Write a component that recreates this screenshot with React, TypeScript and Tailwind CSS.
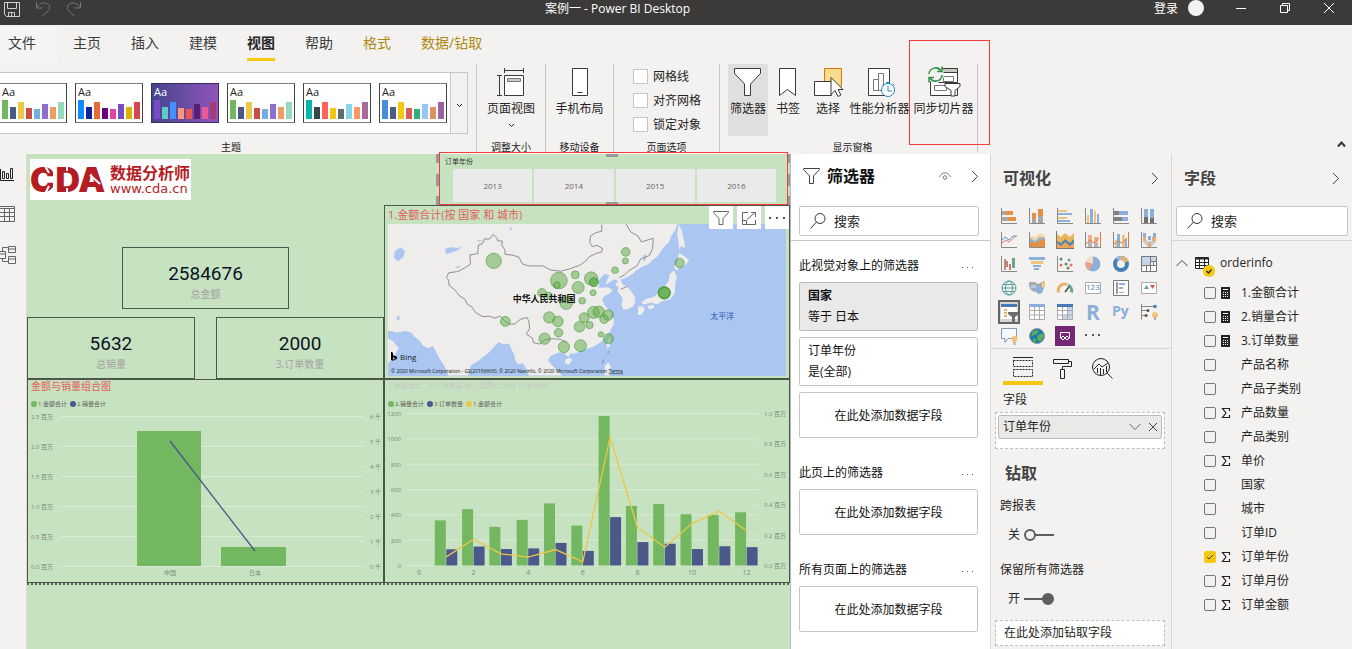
import type { ReactNode } from "react"

const themes = [
  ["#73b761", "#4a588a", "#ecc846", "#cd4c46", "#71afe2", "#8d6fd1", "#ee9e64", "#95dabb"],
  ["#118dff", "#12239e", "#e66c37", "#6b007b", "#e044a7", "#744ec2", "#d9b300", "#d64550"],
  ["#7b4ac7", "#5ecbc8", "#438fff", "#ff977e", "#eb5757", "#5b1e73", "#ec5a96", "#a43b76"],
  ["#73b761", "#4a588a", "#ecc846", "#cd4c46", "#71afe2", "#8d6fd1", "#ee9e64", "#95dabb"],
  ["#01b8aa", "#374649", "#fd625e", "#f2c80f", "#5f6b6d", "#8ad4eb", "#fe9666", "#a66999"],
  ["#4a8ddc", "#4c5d8a", "#f3c911", "#dc5b57", "#33ae81", "#95c8f0", "#dd915f", "#9a64a0"],
]
const themeBars = [19, 12, 17, 11, 10, 15, 12, 17]

const Chevron = ({ d, w = 8, h = 12, color = "#444" }: { d: string; w?: number; h?: number; color?: string }) => (
  <svg width={w} height={h} viewBox={`0 0 ${w} ${h}`} fill="none" stroke={color} className="shrink-0">
    <path d={d} />
  </svg>
)

const TitleBar = () => (
  <header className="flex h-[25px] shrink-0 items-start bg-[#3b3a39] text-xs leading-[18px] text-white">
    <div className="flex gap-4 pl-1">
      <button aria-label="保存" className="h-[18px]">
        <svg width="16" height="16" viewBox="0 0 16 16" fill="none" stroke="#d0d0d0">
          <path d="M.5 1.5h15v14h-13l-2-2zM3.5 1.5v6h9v-6M4.500 15.500v-4h6v4M7.500 12v3" />
        </svg>
      </button>
      <button aria-label="撤消" className="h-[18px]">
        <svg width="15" height="16" viewBox="0 0 15 16" fill="none" stroke="#777">
          <path d="M.5 1v6h6M.5 7C3 2.500 7 1 10.500 2.500c4 1.800 4 5.500 1.500 7.500L6 15.500" />
        </svg>
      </button>
      <button aria-label="恢复" className="h-[18px]">
        <svg width="14" height="16" viewBox="0 0 14 16" fill="none" stroke="#777">
          <path d="M13.500 1v6h-6M13.500 7C11 2.500 7 1 3.500 2.500c-4 1.800-4 5.500-1.500 7.500L8 15.500" />
        </svg>
      </button>
    </div>
    <h1 className="flex-1 text-center">案例一 - Power BI Desktop</h1>
    <button className="h-[18px]">登录</button>
    <span className="ml-2.5 mr-8 size-4 rounded-full bg-[#f3f2f1]" />
    <div className="flex h-4 items-center gap-[34px] pr-[18px]">
      <button aria-label="最小化"><Chevron w={10} h={10} color="#fff" d="M0 5.500h10" /></button>
      <button aria-label="还原"><Chevron w={10} h={10} color="#fff" d="M.5 2.500h7v7h-7zM2.500 2.500v-2h7v7h-2" /></button>
      <button aria-label="关闭"><Chevron w={10} h={10} color="#fff" d="M0 0l10 10M10 0L0 10" /></button>
    </div>
  </header>
)

const tabs = ["主页", "插入", "建模", "视图", "帮助", "格式", "数据/钻取"]

const Tabs = () => (
  <nav className="flex h-9 shrink-0 text-sm leading-9 text-[#3b3a39]">
    <button className="w-[58px] bg-[#f4f4f4] pr-3.5">文件</button>
    {tabs.map((tab, i) => (
      <button
        key={tab}
        className={
          i === 3 ? "relative px-[15px] font-bold text-[#252423]" : i > 4 ? "px-[15px] text-[#b08a13]" : "px-[15px]"
        }
      >
        {tab}
        {i === 3 && <span className="absolute inset-x-[15px] bottom-0 h-[3px] bg-[#f2c811]" />}
      </button>
    ))}
  </nav>
)

const Group = ({ label, className, children }: { label: string; className: string; children: ReactNode }) => (
  <section className={`flex h-[88px] shrink-0 flex-col justify-between border-r border-[#c8c6c4] ${className}`}>
    <div className="flex">{children}</div>
    <h2 className="text-center text-[10px] leading-[10px]">{label}</h2>
  </section>
)

const Tool = ({ label, className = "", icon, children }: { label: string; className?: string; icon: ReactNode; children?: ReactNode }) => (
  <button className={`flex h-[72px] flex-col items-center whitespace-nowrap pt-1 text-xs leading-[18px] ${className}`}>
    <svg width="32" height="32" viewBox="0 0 32 32" fill="none" stroke="#3b3a39" className="shrink-0 overflow-visible">
      {icon}
    </svg>
    {label}
    {children}
  </button>
)

const Ribbon = () => (
  <div className="relative flex h-[93px] shrink-0 pt-[3px] text-[#252423]">
    <section className="flex h-[88px] w-[477px] shrink-0 flex-col justify-between border-r border-[#c8c6c4] pt-2">
      <div className="flex h-[62px] w-[468px] border border-l-0 border-[#c8c6c4] bg-white">
        <div className="flex flex-1 items-center gap-2 overflow-hidden">
          {themes.map((colors, i) => (
            <button
              key={i}
              aria-label={`主题 ${i + 1}`}
              className={`flex h-10 shrink-0 flex-col items-start justify-between border-y pb-[3px] ${
                i === 0 ? "w-[67px] border-r pl-0.5" : "w-[68px] border-x pl-0.5"
              } ${i === 2 ? "border-[#33305e] bg-linear-to-r from-[#43458c] to-[#9153bd] text-white" : "border-x-[#444] border-y-[#777988] bg-white"}`}
            >
              <span className="text-[11px] leading-4">Aa</span>
              <span className="flex h-[19px] items-end gap-0.5">
                {colors.map((color, j) => (
                  <span key={j} className="w-1.5" style={{ background: color, height: themeBars[j] }} />
                ))}
              </span>
            </button>
          ))}
        </div>
        <button aria-label="更多主题" className="flex w-[17px] items-center justify-center border-l border-[#c8c6c4] bg-[#f3f2f1] pt-1">
          <Chevron w={7} h={5} color="#222" d="M1 1l2.500 2.500L6 1" />
        </button>
      </div>
      <h2 className="pr-3.5 text-center text-[10px] leading-[10px]">主题</h2>
    </section>
    <Group label="调整大小" className="w-[69px]">
      <Tool
        label="页面视图"
        className="w-full"
        icon={
          <>
            <path d="M4.500 7.500v20M2 7.500h5M2 27.500h5M9.500 2.500h19M9.500 0v5M28.500 0v5" />
            <path d="M9.500 7.500h19v20h-19z" fill="#fff" />
            <path d="M12.500 10.500h13v3h-13z" fill="#c8c8c8" stroke="#777" />
          </>
        }
      >
        <Chevron w={7} h={14} color="#222" d="M1 6l2.500 2.500L6 6" />
      </Tool>
    </Group>
    <Group label="移动设备" className="w-[68px]">
      <Tool label="手机布局" className="w-full" icon={<><path d="M8.500.5h15v27h-15z" fill="#fff" /><path d="M13.500 24.500h5" /></>} />
    </Group>
    <Group label="页面选项" className="w-[106px]">
      <div className="flex flex-col gap-[9px] pl-[19px] pt-[5px] text-xs leading-[15px]">
        {["网格线", "对齐网格", "锁定对象"].map((label) => (
          <label key={label} className="flex gap-[5px]">
            <input type="checkbox" className="size-[15px] appearance-none border border-[#c8c6c4] bg-white" />
            {label}
          </label>
        ))}
      </div>
    </Group>
    <Group label="显示窗格" className="w-[258px] pl-2">
      <Tool label="筛选器" className="w-10 bg-[#e1dfdd]" icon={<path d="M2.500.5h26v5L18.500 16v11.500h-6V16L2.500 5.500z" fill="#fff" />} />
      <Tool label="书签" className="w-10" icon={<path d="M7.500.5h16v27l-8-6-8 6z" fill="#fff" />} />
      <Tool
        label="选择"
        className="w-10"
        icon={
          <>
            <path d="M12.500.5h17v18h-17z" fill="#f8dc8d" stroke="#d9760f" />
            <path d="M2.500 13.500h17v14h-17z" fill="#fff" />
            <path d="M19 9.500v17l4-4 3 6 3-1.500-3-5.500h5z" fill="#fff" />
          </>
        }
      />
      <Tool
        label="性能分析器"
        className="w-[63px]"
        icon={
          <>
            <path d="M4.500.5h21v27h-21z" fill="#fff" />
            <path d="M9.500 11.500h5v11h-5zM14.500 5.500h5v17h-5z" stroke="#777" />
            <circle cx="24" cy="22" r="6.500" fill="#fff" stroke="#1e88c9" />
            <path d="M24 18v5h4M22 14.500h4M29 16l1.500 1.500M18 16.500l1 1" stroke="#1e88c9" />
          </>
        }
      />
      <div className="relative">
        <Tool
          label="同步切片器"
          className="w-[65px]"
          icon={
            <>
              <path d="M2.500 13.500h27v14h-27z" fill="#fff" />
              <path d="M10.500.5h19v14h-19z" fill="#fff" />
              <path d="M10.500.5h19v4h-19z" fill="#c8c8c8" />
              <path d="M15.500 8.500h10v5h-10zM6.500 17.500h12v5h-12z" stroke="#777" />
              <path d="M17 15.500h15v3l-5 4v5.500h-4v-5.500l-6-4z" fill="#fff" />
              <circle cx="7.500" cy="6.500" r="8.500" fill="#f3f2f1" stroke="none" />
              <path
                d="M1 6A6.500 6.500 0 0 1 13 3M14 -1.500V3.500H9M14 7A6.500 6.500 0 0 1 2 10M1 14.500V9.500H6"
                stroke="#2f9447"
                strokeWidth="1.500"
              />
            </>
          }
        />
        <span className="absolute -left-0.5 -top-6 h-[105px] w-[81px] border border-[#fa3c3c]" />
      </div>
    </Group>
    <button aria-label="折叠功能区" className="absolute bottom-1 right-1 p-0.5">
      <svg width="9" height="7" viewBox="0 0 9 7" fill="none" stroke="#333" strokeWidth="2">
        <path d="M1 5.500l3.500-4 3.500 4" />
      </svg>
    </button>
  </div>
)

const SideNav = () => (
  <nav className="flex w-[27px] shrink-0 flex-col gap-6 overflow-hidden border-r border-[#dddbd9] pt-3">
    <button aria-label="报表">
      <svg width="16" height="16" viewBox="0 0 16 16" fill="none" stroke="#222">
        <path d="M.5 3v11.500H14M2.500 5.500h2v7h-2zM6.500 7.500h2v5h-2zM10.500 2.500h2v10h-2z" />
      </svg>
    </button>
    <button aria-label="数据">
      <svg width="16" height="16" viewBox="0 0 16 16" fill="none" stroke="#666">
        <path d="M0 .5h14.500v15H0M0 2.500h14.500M0 6.500h14.500M0 10.500h14.500M4.500 2.500v13M9.500 2.500v13" />
      </svg>
    </button>
    <button aria-label="模型">
      <svg width="16" height="18" viewBox="0 0 16 18" fill="none" stroke="#666">
        <path d="M8.500.5h7v6h-7zM8.500 3h7M8.500 10.500h7v7h-7zM8.500 13h7M0 5.500h5.500v7H0M0 8h5.500M2.500 5.500v-4h6M2.500 12.500v3h6" />
      </svg>
    </button>
  </nav>
)

const Logo = () => (
  <svg width="161" height="41" viewBox="0 0 161 41" className="ml-[3px] mt-[5px] bg-white" fill="#b51c24">
    <text x="0" y="33" fontSize="34" fontWeight="900" fontFamily="Inter, sans-serif">CDA</text>
    <path d="M15 7l4 7M15 35l4-8M24 7v28M37 6v6M37 29v6M60 16l10 9" stroke="#fff" strokeWidth="2" />
    <text x="80" y="20" fontSize="16" fontWeight="700">数据分析师</text>
    <text x="80" y="34" fontSize="13" fontFamily="DejaVu Sans, sans-serif">www.cda.cn</text>
  </svg>
)

const Card = ({ value, label, className = "" }: { value: string; label: string; className?: string }) => (
  <article className={`flex h-[62px] w-[47%] flex-col items-center border border-[#4b5549] pt-4 ${className}`}>
    <strong className="font-['Roboto',sans-serif] text-[19px] font-normal leading-5 text-[#0b1424]">{value}</strong>
    <span className="mt-1 text-[10px] leading-3 text-[#a3a3a3]">{label}</span>
  </article>
)

const Legend = ({ items }: { items: [string, string][] }) => (
  <ul className="mt-1.5 flex h-3 gap-[3px] pl-[3px] text-[6px] leading-3 text-[#605e5c]">
    {items.map(([label, color]) => (
      <li key={label} className="flex items-center gap-px">
        <span className="size-1.5 rounded-full" style={{ background: color }} />
        {label}
      </li>
    ))}
  </ul>
)

const CountryChart = () => (
  <section className="border border-[#4b5549]">
    <h2 className="pl-[3px] text-[10px] leading-3 text-[#e0605e]">金额与销量组合图</h2>
    <Legend items={[["1.金额合计", "#73b761"], ["2.销量合计", "#4a588a"]]} />
    <svg viewBox="0 0 355 172" className="block w-full" fontSize="6" fill="#7d867a">
      {["2.5", "2.0", "1.5", "1.0", "0.5", "0.0"].map((v, i) => (
        <g key={v}>
          <path d={`M32 ${6.5 + i * 30}h304`} stroke="#d9ebd4" />
          <text x="3" y={9 + i * 30}>{v} 百万</text>
        </g>
      ))}
      {[6, 5, 4, 3, 2, 1, 0].map((v, i) => (
        <g key={v}>
          <path d={`M332 ${6.5 + i * 25}h4`} stroke="#d9ebd4" />
          <text x="342" y={9 + i * 25}>{v} 千</text>
        </g>
      ))}
      <path d="M109 21h64v135h-64zM193 137h65v19h-65z" fill="#73b761" />
      <path d="M142 31l85 110" stroke="#4a588a" strokeWidth="1.300" fill="none" />
      <text x="142" y="165" textAnchor="middle">中国</text>
      <text x="227" y="165" textAnchor="middle">日本</text>
    </svg>
  </section>
)

const sales = [356, 445, 305, 360, 490, 315, 1180, 470, 485, 405, 400, 420]
const orders = [128, 150, 130, 135, 178, 115, 382, 185, 172, 130, 152, 145]
const amount = [0.057, 0.173, 0.077, 0.055, 0.105, 0.024, 0.844, 0.252, 0.12, 0.276, 0.357, 0.228]
const monthX = (m: number) => 34 + m * 27.3
const line = amount.map((v, i) => `${monthX(i + 1)},${155.5 - v * 152}`).join(" ")

const MonthChart = () => (
  <section className="border border-[#4b5549]">
    <h2 className="pl-[3px] text-[7px] leading-3 text-[#c4c9c2]">2.销量合计、3.订单数量 和 1.金额合计(按 订单月份)</h2>
    <Legend items={[["2.销量合计", "#73b761"], ["3.订单数量", "#4a588a"], ["1.金额合计", "#ecc846"]]} />
    <svg viewBox="0 0 404 172" className="block w-full" fontSize="6" fill="#7d867a">
      {[1200, 1000, 800, 600, 400, 200, 0].map((v) => (
        <g key={v}>
          <path d={`M22 ${155.5 - (v * 152) / 1200}h352`} stroke="#d9ebd4" />
          <text x="16" y={158 - (v * 152) / 1200} textAnchor="end">{v}</text>
        </g>
      ))}
      {["0.0", "0.2", "0.4", "0.6", "0.8", "1.0"].map((v, i) => (
        <g key={v}>
          <path d={`M370 ${155.5 - i * 30.4}h4`} stroke="#d9ebd4" />
          <text x="379" y={158 - i * 30.4}>{v} 百万</text>
        </g>
      ))}
      {sales.map((v, i) => (
        <rect key={i} x={monthX(i + 1) - 11.5} y={155.5 - (v * 152) / 1200} width="11" height={(v * 152) / 1200} fill="#73b761" />
      ))}
      {orders.map((v, i) => (
        <rect key={i} x={monthX(i + 1)} y={155.5 - (v * 152) / 1200} width="11" height={(v * 152) / 1200} fill="#4a588a" />
      ))}
      <polyline points={line} fill="none" stroke="#ecc846" strokeWidth="1.300" />
      {[0, 2, 4, 6, 8, 10, 12].map((m) => (
        <text key={m} x={monthX(m)} y="165" textAnchor="middle" fontSize="7">{m}</text>
      ))}
    </svg>
  </section>
)

// x, y, radius
const bubbles = [
  [342, 333, 23], [538, 392, 25], [532, 406, 10], [587, 375, 12], [596, 413, 18], [635, 386, 20], [643, 397, 13],
  [643, 397, 13], [641, 429, 9], [608, 453, 10], [560, 460, 19], [487, 429, 13], [507, 437, 10], [739, 306, 13],
  [738, 333, 9], [707, 361, 10], [901, 339, 14], [855, 429, 19], [855, 429, 18], [855, 429, 16], [377, 515, 15],
  [509, 503, 17], [535, 515, 16], [537, 549, 13], [495, 567, 17], [553, 592, 17], [603, 588, 18], [600, 531, 16],
  [614, 504, 15], [642, 488, 18], [658, 486, 17], [686, 496, 16], [674, 508, 13], [630, 526, 11], [664, 554, 8],
  [687, 567, 15],
]

const MapTile = () => (
  <section className="relative border border-[#4b5549] px-[3px] pb-0.5">
    <h2 className="text-[11px] leading-[18px] text-[#e0605e]">1.金额合计(按 国家 和 城市)</h2>
    <svg viewBox="0 0 399 152" className="block w-full bg-[#abc7f1]">
      <g transform="scale(.3333) translate(-24 -222)">
        <g fill="#eeedeb">
          <path d="M24 222H894L888 240 876 258 868 278 850 296 836 318 818 332 806 344 790 350 772 360 760 372 740 384 724 390 730 404 744 410 756 426 766 440 768 458 760 470 746 478 732 480 726 464 730 446 722 434 714 424 718 414 708 404 716 394 704 388 690 398 678 404 684 388 690 376 676 372 664 384 656 394 660 406 654 412 668 414 684 412 700 420 692 430 676 438 668 448 674 464 690 482 698 492 690 500 704 506 702 524 692 544 680 562 664 578 640 592 612 600 592 610 572 612 566 622 556 612 540 608 528 612 512 620 506 632 516 646 532 662 548 678H447L440 660 430 640 418 644 408 636 404 616 396 600 388 582 372 584 356 578 344 590 330 606 310 622 290 638 274 646 268 662 265 678H205L196 654 180 628 168 606 160 588 146 596 130 588 118 572 104 562 94 548 76 544 50 548 24 543z" />
          <path d="M24 566l14 8 18 22-12 20-20 26zM898 222l10 20 6 28 4 24-12-6-6 12-2-20-4-30zM900 308l16 12 14 10-10 14-18 8-10 10-8-10 10-14zM884 362l8 18-4 24-2 26-14 18-24 6-14 10-18-6-20 6-10-4 12-12 28-8 12-12 16-16 14-18 4-22zM776 470l16 0 4 12-12 14-8 0 0-12zM804 468l20-2 0 8-14 6zM556 630l14-6 8 6-8 14-12-2zM682 578l8-18 6 4-6 26-8 6zM676 650l10-12 8 12-2 28h-16z" />
        </g>
        <g fill="#abc7f1">
          <path d="M196 296l18-4 22 2 16-6-20 14-22 8-12 2zM44 304l18-12 12 10-2 18-18 14-12-10zM226 350l18 0-10 6zM388 232l10 2-4 8zM792 316l8-2 0 14-8 8zM50 500l8-2 0 12-6 2zM290 270l18 2-8 4z" />
        </g>
        <g fill="none" stroke="#7b7b7b" strokeWidth="2.500" strokeLinejoin="round">
          <path d="M340 253l12 12 2 8 14 0-2 12 10 16 0 12 24 3 18 6 10 20 18 6 44 0 22 12 32 4 30-8 26-10 18-12 12-14 22-10 15-4 2-10-16-10-14 4-8-12 2-20 16-10 18-4 0-20" />
          <path d="M340 253l-10 14-16 0-6 14-12 4-2 26-24 4 2 28-26 16-12 6-28 4-6 14 6 8 2 16 18 14 12 16 18 12 6 14 14 8 12 18 22 12 18-2 16 6 18-6 12 14 16 10 14 0 18-14 20-6 6 12 2 22-10 16 18 12 4 14 18 4 14-12 24-4 24 2 20 8" />
          <path d="M740 222l14 24 22 12 10 18 36-11-2 30-10 22-26 10-10 20-26 16-12 12-16 8M744 410l-20 8M690 604l-6 8M674 630l-6 12" />
        </g>
        <path d="M930 322l28-16 22-14 26-28 16-24" fill="none" stroke="#cddaf0" strokeWidth="2" strokeDasharray="4 10" />
        <g fill="#5fac48" fillOpacity=".52" stroke="#3f9031" strokeOpacity=".65" strokeWidth="2.500">
          {bubbles.map(([x, y, r], i) => (
            <circle key={i} cx={x} cy={y} r={r} />
          ))}
        </g>
      </g>
      <text x="125" y="78" fontSize="9" fontWeight="700" fill="#111">中华人民共和国</text>
      <text x="323" y="95" fontSize="8" fill="#2b57b5">太平洋</text>
      <path d="M3 128l2 1v7l2-1-2-2-1-2 5 2v2l-4 2-2-1z" fill="#000" />
      <text x="12" y="136" fontSize="8" fill="#222">Bing</text>
      <text x="3" y="149" fontSize="5" fill="#111">
        © 2020 Microsoft Corporation - GS(2019)6630, © 2020 NavInfo, © 2020 Microsoft Corporation{" "}
        <tspan textDecoration="underline">Terms</tspan>
      </text>
    </svg>
    <div className="absolute right-0 top-0 flex gap-1">
      <button aria-label="筛选器" className="flex h-[23px] w-6 items-center justify-center bg-white">
        <Chevron w={16} h={16} color="#666" d="M.5 1.500h15v1L10 8.500v6H6v-6L.5 2.500z" />
      </button>
      <button aria-label="焦点模式" className="flex h-[23px] w-6 items-center justify-center bg-white">
        <Chevron w={16} h={14} color="#666" d="M7 1.500H1.500v12h13V9M5.500 13.500v-4h-4M6 8.500l8-7M10 1.500h4.500V6" />
      </button>
      <button aria-label="更多选项" className="flex h-[23px] w-6 items-center justify-center bg-white">
        <svg width="16" height="4" viewBox="0 0 16 4" fill="#555">
          <path d="M0 1h2v2H0zM7 1h2v2H7zM14 1h2v2h-2z" />
        </svg>
      </button>
    </div>
  </section>
)

const handles = [
  "left-0 top-0 h-[9px] w-1",
  "left-0 top-5 h-3 w-1",
  "bottom-0 left-0 h-[9px] w-1",
  "right-0 top-0 h-[9px] w-[3px]",
  "right-0 top-5 h-3 w-[3px]",
  "bottom-0 right-0 h-[9px] w-[3px]",
  "left-[48%] top-0 h-[3px] w-3",
  "bottom-0 left-[48%] h-[3px] w-3",
]

const Slicer = () => (
  <div role="group" aria-labelledby="slicer-title" className="relative ml-[52px] h-[51px] pl-[9px] pr-3.5">
    <h2 id="slicer-title" className="pb-px pt-0.5 text-[7px] leading-3 text-[#333]">订单年份</h2>
    <div className="grid h-[33px] grid-cols-4 gap-0.5 pl-2">
      {[2013, 2014, 2015, 2016].map((year) => (
        <button key={year} className="bg-[#eaeaea] text-[8px] leading-3 text-[#666]">
          {year}
        </button>
      ))}
    </div>
    {handles.map((place) => (
      <span key={place} className={`absolute bg-[#999] ${place}`} />
    ))}
    <span className="absolute -top-0.5 bottom-0 left-[3px] right-0.5 z-10 border border-[#fa3c3c]" />
  </div>
)

const Canvas = () => (
  <main className="grid flex-1 grid-cols-[357fr_406fr] content-start bg-[#c7e2c0]">
    <div className="flex flex-col">
      <Logo />
      <Card value="2584676" label="总金额" className="mx-auto mt-[47px]" />
      <div className="mt-2 flex justify-between">
        <Card value="5632" label="总销量" />
        <Card value="2000" label="3.订单数量" />
      </div>
      <CountryChart />
    </div>
    <div className="flex flex-col">
      <Slicer />
      <MapTile />
      <MonthChart />
    </div>
    <hr className="col-span-2 h-0.5 border-0 bg-[repeating-linear-gradient(90deg,#5c655a_0_2px,transparent_2px_4px)]" />
  </main>
)

const Search = ({ id }: { id: string }) => (
  <label htmlFor={id} className="flex h-[30px] items-center gap-2 rounded-xs border border-[#c8c6c4] bg-white pl-2.5">
    <svg width="16" height="16" viewBox="0 0 16 16" fill="none" stroke="#333" className="shrink-0">
      <circle cx="10" cy="5.500" r="5" />
      <path d="M6.500 9L.5 15.500" />
    </svg>
    <input id={id} placeholder="搜索" className="w-full text-[13px] leading-5 outline-none placeholder:text-[#252423]" />
  </label>
)

const FilterSection = ({ title, children }: { title: string; children: ReactNode }) => (
  <section className="mb-[17px] flex flex-col gap-1.5">
    <div className="-mb-1.5 flex h-[34px] items-center justify-between pr-1">
      <h3>{title}</h3>
      <button aria-label="更多">
        <svg width="12" height="8" viewBox="0 0 12 8" fill="#555">
          <path d="M0 6h1v1H0zM5 6h1v1H5zM10 6h1v1h-1z" />
        </svg>
      </button>
    </div>
    {children}
  </section>
)

const DropBox = () => (
  <div className="flex h-[46px] items-center justify-center rounded-xs border border-[#c8c6c4]">在此处添加数据字段</div>
)

const Filters = () => (
  <aside className="w-[201px] shrink-0 border-x border-l-[#b8b8b8] border-r-[#dddbd9] bg-white text-xs leading-[21px] text-[#111]">
    <header className="flex h-[52px] items-center pb-2 pl-3 pr-[11px]">
      <Chevron w={17} h={16} d="M.5.5h16v1L10.500 8v7.500h-4V8L.5 1.500z" />
      <h2 className="flex-1 pl-[7px] text-base font-bold leading-6">筛选器</h2>
      <button aria-label="显示筛选器" className="mr-5">
        <svg width="12" height="9" viewBox="0 0 12 9" fill="none" stroke="#777">
          <path d="M.5 5C3-.5 9-.5 11.500 5" />
          <circle cx="6" cy="5.500" r="1.800" />
        </svg>
      </button>
      <button aria-label="折叠"><Chevron d="M1 1l5.500 5.500L1 12" h={13} /></button>
    </header>
    <div className="border-b border-[#c8c6c4] pb-1 pl-2 pr-[11px]">
      <Search id="filter-search" />
    </div>
    <div className="pl-2 pr-3 pt-[7px]">
      <FilterSection title="此视觉对象上的筛选器">
        <div className="h-[49px] rounded-xs border border-[#bbb] bg-[#e9e9e9] px-2 pt-0.5">
          <strong className="block">国家</strong>等于 日本
        </div>
        <div className="h-[49px] rounded-xs border border-[#c8c6c4] px-2 pt-0.5">
          <span className="block">订单年份</span>是(全部)
        </div>
        <DropBox />
      </FilterSection>
      <FilterSection title="此页上的筛选器">
        <DropBox />
      </FilterSection>
      <FilterSection title="所有页面上的筛选器">
        <DropBox />
      </FilterSection>
    </div>
  </aside>
)

const axis = <path d="M.5 0v15.500H16" fill="none" stroke="#888" />
const frame = <path d="M.5.5h15v15H.5z" fill="#fff" stroke="#777" />

const visuals: [string, ReactNode][] = [
  ["堆积条形图", <><path d="M1 3h4v4H1zM1 9h6v4H1z" fill="#a8a8a8" /><path d="M5 3h7v4H5zM7 9h8v4H7z" fill="#e58e46" />{axis}</>],
  ["堆积柱形图", <><path d="M3 11h4v4H3zM9 8h5v7H9z" fill="#a8a8a8" /><path d="M3 5h4v6H3zM9 1h5v7H9z" fill="#e58e46" />{axis}</>],
  ["簇状条形图", <><path d="M1 2h9v2H1zM1 9h9v2H1z" fill="#ecc47a" /><path d="M1 5h14v2H1zM1 12h12v2H1z" fill="#8bafd8" />{axis}</>],
  ["簇状柱形图", <><path d="M2 7h2v8H2zM9 3h2v12H9z" fill="#ecc47a" /><path d="M5 1h3v14H5zM12 6h2v9h-2z" fill="#8bafd8" />{axis}</>],
  ["百分比堆积条形图", <><path d="M1 3h5v4H1zM1 9h8v4H1z" fill="#808080" /><path d="M6 3h9v4H6zM9 9h6v4H9z" fill="#8bafd8" />{axis}</>],
  ["百分比堆积柱形图", <><path d="M3 9h4v6H3zM9 10h4v5H9z" fill="#707070" /><path d="M3 1h4v8H3zM9 1h4v9H9z" fill="#8bafd8" />{axis}</>],
  ["折线图", <><path d="M1 11l4-3 3 2 7-6" fill="none" stroke="#e07b6c" /><path d="M1 8l3-3 4 3 4-4 4 0" fill="none" stroke="#5b8fc9" />{axis}</>],
  ["分区图", <><path d="M1 3l5 2 5-4 5 2v8H1z" fill="#f3d8b0" /><path d="M1 6l5 3 5-4 5 1v5H1z" fill="#8fb4cf" /><path d="M1 9l5 2 5-3 5-1v9H1z" fill="#e58e46" />{axis}</>],
  ["堆积面积图", <><path d="M0 2l4 3 4-4 5 4 4-4v14H0z" fill="#ecb45a" /><path d="M0 9l4 2 4-4 5 4 4-4v8H0z" fill="#4f87ad" /><path d="M0 11l4 3 4-4 5 4 4-3v5H0z" fill="#eba45a" /><path d="M-.5 -1v17.500H17" stroke="#777" fill="none" /></>],
  ["折线和堆积柱形图", <><path d="M3 3h4v12H3zM9 5h4v10H9z" fill="#efb08c" /><path d="M3 10h4v5H3zM9 11h4v4H9z" fill="#b5b5b5" /><path d="M1 12l4-4 4 3 5-5M15.500 0v15" stroke="#e07b4c" fill="none" />{axis}</>],
  ["折线和簇状柱形图", <><path d="M2 8h2v7H2zM9 3h3v12H9z" fill="#ecc47a" /><path d="M4 2h3v13H4zM12 7h2v8h-2z" fill="#8bafd8" /><path d="M1 12l4-3 4 2 5-5M15.500 0v15" stroke="#e07b4c" fill="none" />{axis}</>],
  ["功能区图表", <><path d="M2 1h3v5H2zM7 4h3v4H7zM12 1h3v4h-3z" fill="#8bafd8" /><path d="M2 6l5 3h3l5-3v4l-4 4H6L2 10z" fill="#c9c9c9" /><path d="M2 5h3v4H2zM11 5h4v4h-4zM7 11h3v4H7z" fill="#e9ab70" />{axis}</>],
  ["瀑布图", <><path d="M3 3h2v11H3z" fill="#999" /><path d="M5 5h2v6H5zM8 8h2v6H8z" fill="#df7464" /><path d="M11 2h3v10h-3z" fill="#62a68b" />{axis}</>],
  ["漏斗图", <><path d="M0 1h16v3H0z" fill="#8bafd8" /><path d="M2 5h12v3H2z" fill="#ecc47a" /><path d="M4 9h8v2H4zM5 12h5v2H5z" fill="#8bafd8" /></>],
  ["散点图", <><g fill="#4f87ad"><circle cx="4" cy="3" r="1.500" /><circle cx="9" cy="8" r="1.500" /></g><g fill="#df7464"><circle cx="4" cy="9" r="1.500" /><circle cx="14" cy="9" r="1.500" /></g><circle cx="12" cy="4" r="1.500" fill="#62a68b" /><circle cx="11" cy="12" r="1.500" fill="#8b7960" />{axis}</>],
  ["饼图", <><circle cx="8" cy="8" r="7.500" fill="#8bafd8" /><path d="M8 8V.5A7.500 7.500 0 0 0 .8 6z" fill="#f5dcc0" /><path d="M8 8L.8 6a7.500 7.500 0 0 0 3 8.500z" fill="#e9a191" /></>],
  ["环形图", <g fill="none" strokeWidth="4"><circle cx="8" cy="8" r="6" stroke="#417fb5" /><path d="M8 2a6 6 0 0 1 5.500 4" stroke="#e9b26a" /><path d="M4 3.500A6 6 0 0 1 8 2" stroke="#9abbe0" /></g>],
  ["树状图", <>{frame}<path d="M1 1h8v8H1zM10 1h5v4h-5z" fill="#c5d6ea" /><path d="M9.500 1v14M1 9.500h14M10 5.500h5M12.500 5.500v4M5.500 10v5" stroke="#777" fill="none" /></>],
  ["地图", <g fill="none" stroke="#5b9f9b"><circle cx="8" cy="8" r="7" /><ellipse cx="8" cy="8" rx="3.500" ry="7" /><path d="M1 8h14M2 4.500h12M2 11.500h12" /></g>],
  ["着色地图", <><path d="M0 2h6l3 2 4-2v5l-2 3-3 0-3 2-3-2-2-4z" fill="#aaa" /><path d="M6 6h6l3 2-2 5-4 1-3-3z" fill="#8bafd8" /><path d="M2 5h5v3H2z" fill="#b5cbe5" /><path d="M13 1h3v6l-2 2z" fill="#ecc47a" /></>],
  ["仪表", <g fill="none" strokeWidth="3"><path d="M1.500 12.500A6.500 6.500 0 0 1 10 4.500" stroke="#e9b26a" /><path d="M11 5a6.500 6.500 0 0 1 3.500 7.500" stroke="#62a68b" /><path d="M8 12l4-5" stroke="#444" strokeWidth="1.500" /></g>],
  ["卡片图", <><path d="M.5 2.500h15v11H.5z" fill="#fff" stroke="#aaa" /><text x="1" y="10" fontSize="8" fill="#417fb5">123</text></>],
  ["多行卡", <>{frame}<path d="M3 2h2v12H3z" fill="#999" /><path d="M6 3h6v2H6zM6 7h4v2H6z" fill="#8bafd8" /><path d="M6 12h5v1H6z" fill="#aaa" /></>],
  ["KPI", <><path d="M.5 2.500h15v11H.5z" fill="#fff" stroke="#aaa" /><path d="M3 9l2.500-4L8 9z" fill="#62a68b" /><path d="M9 5h5l-2.500 4z" fill="#df5050" /></>],
  ["切片器", <><path d="M0 0h16v15H0z" fill="#fff" /><path d="M0 0h16v3H0z" fill="#4779b4" /><path d="M3 5h3v2H3zM3 8h3v2H3zM3 11h3v2H3z" fill="#e9b26a" /><path d="M7 8h11v2l-4 3v5h-3v-5L7 10z" fill="#6e6e6e" /></>],
  ["表", <><path d="M.5.500h15v15H.5z" fill="#fff" stroke="#aaa" /><path d="M1 6.500h14M1 11h14M5.500 3v12M10.500 3v12" stroke="#aaa" /><path d="M0 0h16v3H0z" fill="#8bafd8" /></>],
  ["矩阵", <><path d="M.5.500h15v15H.5z" fill="#fff" stroke="#aaa" /><path d="M10 3h5v12h-5zM5 11h6v4H5z" fill="#c5d6ea" /><path d="M1 6.500h14M1 11h14M5.500 3v12M10.500 3v12" stroke="#aaa" /><path d="M0 0h16v3H0z" fill="#4779b4" /></>],
  ["R 脚本", <text x="1" y="16" fontSize="21" fontWeight="700" fill="#8bafd8">R</text>],
  ["Python", <text x="-1" y="12" fontSize="14" fontWeight="700" fill="#8bafd8">Py</text>],
  ["关键影响者", <><path d="M.5 0v15.500M1 2.500h13M1 6.500h6M1 11.500h6" stroke="#888" /><circle cx="14" cy="2.500" r="1.800" fill="#417fb5" /><circle cx="7" cy="6.500" r="1.500" fill="#555" /><circle cx="5" cy="11.500" r="1.500" fill="#555" /><circle cx="14" cy="11" r="3" fill="#ecc47a" /><path d="M13 13h2v3h-2z" fill="#aaa" /></>],
  ["问答", <><path d="M.5.5h15v10H7l-3 4v-4H.5z" fill="#f8f8f8" stroke="#7d9cba" /><circle cx="13.500" cy="11" r="3" fill="#ecc47a" /><path d="M12.500 13.500h2V17h-2z" fill="#aaa" /></>],
  ["ArcGIS 地图", <><circle cx="8" cy="8" r="7.500" fill="#1579b5" stroke="#999" /><path d="M3 4l4-2 3 1-2 3-3 1-3 2zM9 7l4-2 2 3-3 5-3 0-1-3zM4 10l3 1v4l-3-2z" fill="#5cae5a" /></>],
  ["Power Apps", <><path d="M-2-2h20v20H-2z" fill="#742774" /><path d="M3.500 10.500v-6h9v6" fill="none" stroke="#fff" /><path d="M4 10l2-2 2 2 2-2 2 2-2 2-2-2-2 2z" fill="none" stroke="#fff" /></>],
  ["更多视觉对象", <path d="M0 6h2v2H0zM7 6h2v2H7zM13 6h2v2h-2z" fill="#555" />],
]

const Switch = ({ id, label, state, on }: { id: string; label: string; state: string; on?: boolean }) => (
  <div className="pl-[9px]">
    <h3 className="leading-[18px]">{label}</h3>
    <label htmlFor={id} className="mt-[11px] flex h-[18px] items-center gap-1 pl-2">
      {state}
      <input id={id} type="checkbox" role="switch" aria-label={label} defaultChecked={on} className="sr-only" />
      <svg width="30" height="12" viewBox="0 0 30 12" fill="none" stroke="#605e5c" strokeWidth="2">
        {on ? <><path d="M0 6h20" /><circle cx="24" cy="6" r="5" fill="#605e5c" /></> : <><circle cx="6" cy="6" r="5" /><path d="M11 6h19" /></>}
      </svg>
    </label>
  </div>
)

const Visualizations = () => (
  <aside className="flex w-[180px] shrink-0 flex-col text-xs text-[#252423]">
    <header className="flex h-[50px] items-center justify-between px-3 pb-0.5">
      <h2 className="text-base font-bold leading-6 text-[#444]">可视化</h2>
      <button aria-label="折叠"><Chevron d="M1 1l5.500 5.500L1 12" h={13} /></button>
    </header>
    <div className="grid grid-cols-[repeat(6,28px)] pl-1">
      {visuals.map(([name, icon]) => (
        <button
          key={name}
          aria-label={name}
          className={`flex h-6 items-center justify-center ${name === "切片器" ? "mx-[3px] bg-[#d5d5d5] outline-2 -outline-offset-2 outline-[#666]" : ""}`}
        >
          <svg width="16" height="16" viewBox="0 0 16 16" className="overflow-visible">
            {icon}
          </svg>
        </button>
      ))}
    </div>
    <div className="flex gap-5 border-t border-[#d8d6d4] pl-3 pt-2">
      <button aria-label="字段" className="flex w-10 flex-col items-center gap-[3px] border-b-4 border-[#f2c811] pb-1">
        <svg width="22" height="20" viewBox="0 0 22 20" fill="none" stroke="#252423" className="shrink-0">
          <path d="M1 .5h20" />
          <path d="M1.500 3.500h19v6h-19zM1.500 12.500h19v7h-19z" strokeDasharray="2 1" />
        </svg>
      </button>
      <button aria-label="格式" className="-ml-2.5 mb-1.5">
        <Chevron w={19} h={21} color="#252423" d="M.5 1.500h15v4H.5zM15.500 3.500h3v5h-9v3M7.500 11.500h4v9h-4z" />
      </button>
      <button aria-label="分析" className="mb-1.5">
        <svg width="21" height="21" viewBox="0 0 21 21" fill="none" stroke="#252423">
          <circle cx="9" cy="9" r="8.500" />
          <path d="M15 15l5.500 5.500M2 11l5-5 3 3 6-4M5.500 10v5M8.500 10v7M11.500 11v5M14.500 8v6" />
        </svg>
      </button>
    </div>
    <h3 className="pl-3 pt-1.5 leading-[17px]">字段</h3>
    <div className="ml-1 mr-1.5 mt-1 h-[37px] border border-dashed border-[#c0bebc] bg-white p-0.5">
      <div className="flex h-6 items-center gap-2 rounded-xs border border-[#bdbbb9] bg-[#eae9e8] pl-1 pr-1">
        <span className="flex-1">订单年份</span>
        <button aria-label="展开"><Chevron w={12} h={8} color="#666" d="M.5 1L6 6.500 11.500 1" /></button>
        <button aria-label="删除"><Chevron w={8} h={8} color="#444" d="M0 0l8 8M8 0L0 8" /></button>
      </div>
    </div>
    <h2 className="my-3 pl-3.5 text-base font-bold leading-6 text-[#444]">钻取</h2>
    <Switch id="cross-report" label="跨报表" state="关" />
    <div className="h-[17px]" />
    <Switch id="keep-filters" label="保留所有筛选器" state="开" on />
    <div className="ml-1 mr-1.5 mt-3 border border-dashed border-[#c0bebc] bg-white pl-2 leading-6">在此处添加钻取字段</div>
  </aside>
)

const sigma = <path d="M8.500 4V1.500H1.500L5 6 1.500 10.500h7V8" fill="none" stroke="#252423" strokeWidth="1.200" />
const calculator = (
  <>
    <path d="M0 0h9v12H0z" fill="#252423" />
    <path d="M2 2h5v1H2zM2 5h1v1H2zM4 5h1v1H4zM6 5h1v1H6zM2 7h1v1H2zM4 7h1v1H4zM6 7h1v1H6zM2 9h1v1H2zM4 9h1v1H4zM6 9h1v1H6z" fill="#fff" />
  </>
)

const fields: [string, ReactNode?][] = [
  ["1.金额合计", calculator],
  ["2.销量合计", calculator],
  ["3.订单数量", calculator],
  ["产品名称"],
  ["产品子类别"],
  ["产品数量", sigma],
  ["产品类别"],
  ["单价", sigma],
  ["国家"],
  ["城市"],
  ["订单ID"],
  ["订单年份", sigma],
  ["订单月份", sigma],
  ["订单金额", sigma],
]

const Fields = () => (
  <aside className="w-[181px] shrink-0 border-l border-[#d8d6d4] text-xs text-[#252423]">
    <header className="flex h-[52px] items-center justify-between px-3 pb-1">
      <h2 className="text-base font-bold leading-6 text-[#444]">字段</h2>
      <button aria-label="折叠"><Chevron d="M1 1l5.500 5.500L1 12" h={13} /></button>
    </header>
    <div className="border-b border-[#d8d6d4] px-1 pb-1">
      <Search id="field-search" />
    </div>
    <button className="flex h-10 items-center gap-[7px] pl-1 pt-1">
      <Chevron w={12} h={8} d="M.5 7L6 1.500 11.500 7" />
      <span className="relative">
        <svg width="14" height="12" viewBox="0 0 14 12" fill="#fff" stroke="#252423">
          <path d="M.5.5h13v11H.5zM.5 5.500h13M.5 8.500h13M4.500 2v10M9.500 2v10" />
          <path d="M.5 1.500h13" strokeWidth="2" />
        </svg>
        <svg width="12" height="12" viewBox="0 0 12 12" className="absolute -bottom-2 -right-1.5">
          <circle cx="6" cy="6" r="6" fill="#f2c811" />
          <path d="M3.500 6l2 2 3-3.500" fill="none" stroke="#252423" strokeWidth="1.300" />
        </svg>
      </span>
      <span className="pl-1">orderinfo</span>
    </button>
    <ul>
      {fields.map(([name, icon]) => (
        <li key={name}>
          <label className="relative flex h-6 items-center pl-8">
            <input
              type="checkbox"
              defaultChecked={name === "订单年份"}
              className="size-3 appearance-none rounded-xs border border-[#777] checked:border-[#f2c811] checked:bg-[#f2c811]"
            />
            {name === "订单年份" && (
              <svg width="12" height="12" viewBox="0 0 12 12" className="absolute left-8">
                <path d="M3 6l2 2 4-4" fill="none" stroke="#444" />
              </svg>
            )}
            <svg width="10" height="12" viewBox="0 0 10 12" className="ml-[5px] mr-2.5">
              {icon}
            </svg>
            {name}
          </label>
        </li>
      ))}
    </ul>
  </aside>
)

const App = () => {
  return (
    <div className="flex h-screen flex-col overflow-hidden bg-[#f3f2f1] font-['Open_Sans','Noto_Sans_CJK_SC',sans-serif]">
      <TitleBar />
      <Tabs />
      <Ribbon />
      <div className="flex min-h-0 flex-1">
        <SideNav />
        <Canvas />
        <Filters />
        <Visualizations />
        <Fields />
      </div>
    </div>
  )
}

export default App
